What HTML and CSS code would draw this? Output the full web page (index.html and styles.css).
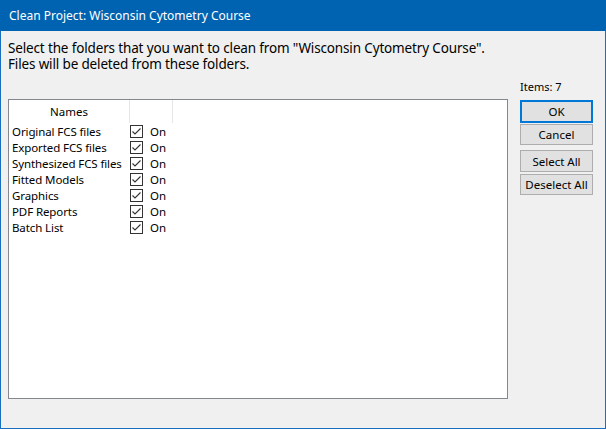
FILE: index.html
```html
<!DOCTYPE html>
<html>
<head>
<meta charset="utf-8">
<link rel="stylesheet" href="styles.css">
</head>
<body>
<div class="window">
  <div class="titlebar">Clean Project: Wisconsin Cytometry Course</div>
  <div class="content">
    <div class="intro">
      <div class="line">Select the folders that you want to clean from "Wisconsin Cytometry Course".</div>
      <div class="line">Files will be deleted from these folders.</div>
    </div>
    <div class="main">
      <div class="list">
        <div class="header">
          <div class="col-name">Names</div>
          <div class="col-check"></div>
        </div>
        <div class="rows">
          <div class="row"><span class="name">Original FCS files</span><span class="cb"><svg width="13" height="13" viewBox="0 0 13 13"><rect x="0.5" y="0.5" width="12" height="12" fill="#fff" stroke="#333"/><path d="M2.5 6.5 L5 9 L10.5 3.5" fill="none" stroke="#333" stroke-width="1.1"/></svg>On</span></div>
          <div class="row"><span class="name">Exported FCS files</span><span class="cb"><svg width="13" height="13" viewBox="0 0 13 13"><rect x="0.5" y="0.5" width="12" height="12" fill="#fff" stroke="#333"/><path d="M2.5 6.5 L5 9 L10.5 3.5" fill="none" stroke="#333" stroke-width="1.1"/></svg>On</span></div>
          <div class="row"><span class="name">Synthesized FCS files</span><span class="cb"><svg width="13" height="13" viewBox="0 0 13 13"><rect x="0.5" y="0.5" width="12" height="12" fill="#fff" stroke="#333"/><path d="M2.5 6.5 L5 9 L10.5 3.5" fill="none" stroke="#333" stroke-width="1.1"/></svg>On</span></div>
          <div class="row"><span class="name">Fitted Models</span><span class="cb"><svg width="13" height="13" viewBox="0 0 13 13"><rect x="0.5" y="0.5" width="12" height="12" fill="#fff" stroke="#333"/><path d="M2.5 6.5 L5 9 L10.5 3.5" fill="none" stroke="#333" stroke-width="1.1"/></svg>On</span></div>
          <div class="row"><span class="name">Graphics</span><span class="cb"><svg width="13" height="13" viewBox="0 0 13 13"><rect x="0.5" y="0.5" width="12" height="12" fill="#fff" stroke="#333"/><path d="M2.5 6.5 L5 9 L10.5 3.5" fill="none" stroke="#333" stroke-width="1.1"/></svg>On</span></div>
          <div class="row"><span class="name">PDF Reports</span><span class="cb"><svg width="13" height="13" viewBox="0 0 13 13"><rect x="0.5" y="0.5" width="12" height="12" fill="#fff" stroke="#333"/><path d="M2.5 6.5 L5 9 L10.5 3.5" fill="none" stroke="#333" stroke-width="1.1"/></svg>On</span></div>
          <div class="row"><span class="name">Batch List</span><span class="cb"><svg width="13" height="13" viewBox="0 0 13 13"><rect x="0.5" y="0.5" width="12" height="12" fill="#fff" stroke="#333"/><path d="M2.5 6.5 L5 9 L10.5 3.5" fill="none" stroke="#333" stroke-width="1.1"/></svg>On</span></div>
        </div>
      </div>
      <div class="side">
        <div class="items">Items: 7</div>
        <button class="btn default">OK</button>
        <button class="btn">Cancel</button>
        <button class="btn gap">Select All</button>
        <button class="btn">Deselect All</button>
      </div>
    </div>
  </div>
</div>
</body>
</html>
```
FILE: styles.css
```css
* { box-sizing: border-box; }
html, body { margin: 0; padding: 0; }
body {
  width: 606px;
  height: 429px;
  font-family: "Noto Sans", "Open Sans", sans-serif;
  color: #000;
}
.window {
  width: 606px;
  height: 429px;
  border: 1px solid #1a6fc0;
  border-top: none;
  background: #f0f0f0;
  display: flex;
  flex-direction: column;
}
.titlebar {
  height: 31px;
  background: #0063b1;
  color: #fff;
  font-size: 12px;
  line-height: 31px;
  padding-left: 9px;
  margin: 0 -1px;
}
.content {
  flex: 1;
  padding: 9px 0 0 7px;
  display: flex;
  flex-direction: column;
}
.intro {
  font-size: 13.5px;
  letter-spacing: -0.15px;
}
.line {
  height: 16px;
  line-height: 16px;
  white-space: nowrap;
}
.main {
  display: flex;
  margin-top: 15px;
  height: 312px;
}
.list {
  width: 500px;
  height: 300px;
  margin-top: 12px;
  border: 1px solid #828790;
  background: #fff;
  font-size: 11.5px;
}
.header {
  display: flex;
  height: 23px;
}
.col-name {
  width: 121px;
  text-align: center;
  line-height: 23px;
  border-right: 1px solid #e5e5e5;
}
.col-check {
  width: 43px;
  border-right: 1px solid #e5e5e5;
}
.row {
  display: flex;
  align-items: center;
  height: 16px;
  padding-left: 3px;
}
.name { width: 118px; white-space: nowrap; letter-spacing: -0.1px; }
.cb { display: flex; align-items: center; gap: 7px; }
.cb svg { display: block; }
.side {
  display: flex;
  flex-direction: column;
  margin-left: 11px;
  width: 74px;
}
.items {
  font-size: 11px;
  height: 12px;
  line-height: 12px;
  margin-top: -6px;
  margin-bottom: 7px;
  padding-left: 1px;
}
.btn {
  width: 73px;
  height: 21px;
  margin: 0 0 2px 1px;
  border: 1px solid #adadad;
  background: #e1e1e1;
  font-family: inherit;
  font-size: 11.5px;
  padding: 0;
  color: #000;
}
.btn.default { border: 2px solid #0078d7; height: 23px; margin-bottom: 1px; }
.btn.gap { margin-top: 3px; height: 22px; }
```
